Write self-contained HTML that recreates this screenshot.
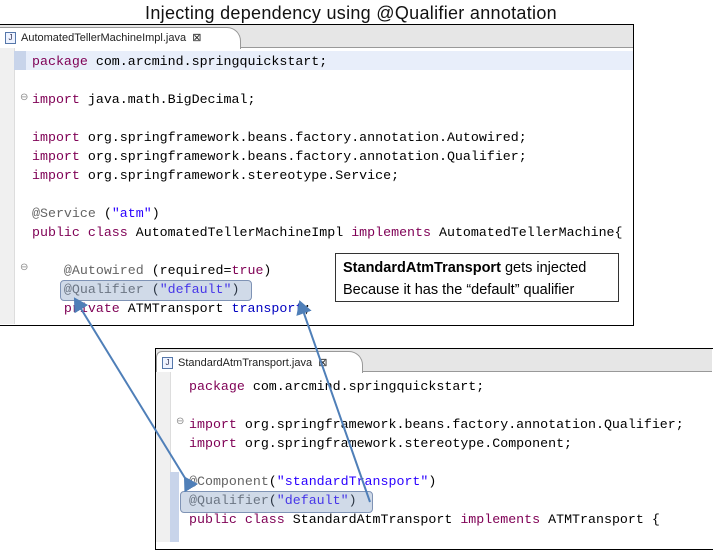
<!DOCTYPE html>
<html><head><style>
body{margin:0;width:720px;height:540px;background:#fff;position:relative;overflow:hidden;font-family:"Liberation Sans",sans-serif}
.a{position:absolute}
.code{font-family:"Liberation Mono",monospace;font-size:13.3px;white-space:pre;color:#000;line-height:19px}
.k{color:#7f0055}.s{color:#2a00ff}.n{color:#646464}.f{color:#0000c0}
.tab{font-size:11px;color:#222}
.ji{display:inline-block;width:9px;height:10px;border:1px solid #5577aa;background:#eef3ff;font-size:8px;line-height:10px;text-align:center;color:#335;vertical-align:middle;margin-right:5px}
</style></head><body>
<div class="a" style="left:0;top:3px;width:702px;text-align:center;font-size:18px;color:#111;letter-spacing:0.3px">Injecting dependency using @Qualifier annotation</div>

<!-- top panel -->
<div class="a" style="left:0;top:24px;width:633px;height:300px;border:1px solid #000;border-left:none;background:#fff"></div>
<div class="a" style="left:0;top:25px;width:633px;height:22px;background:#e6e6e6;border-bottom:1px solid #999"></div>
<div class="a" style="left:0;top:27px;width:240px;height:21px;background:#fff;border-radius:0 14px 0 0;border:1px solid #999;border-bottom:none;border-left:none"></div>
<div class="a tab" style="left:5px;top:31px"><span class="ji">J</span>AutomatedTellerMachineImpl.java&nbsp; ⊠</div>
<div class="a" style="left:0;top:48px;width:14px;height:276px;background:#f0f0f0;border-right:1px solid #ddd"></div>
<div class="a" style="left:15px;top:51px;width:618px;height:19px;background:#e8eefa"></div>
<div class="a" style="left:14px;top:51px;width:12px;height:19px;background:#c8d4ea"></div>
<div class="a code" style="left:32px;top:52px"><span class="k">package</span> com.arcmind.springquickstart;

<span class="k">import</span> java.math.BigDecimal;

<span class="k">import</span> org.springframework.beans.factory.annotation.Autowired;
<span class="k">import</span> org.springframework.beans.factory.annotation.Qualifier;
<span class="k">import</span> org.springframework.stereotype.Service;

<span class="n">@Service</span> (<span class="s">"atm"</span>)
<span class="k">public class</span> AutomatedTellerMachineImpl <span class="k">implements</span> AutomatedTellerMachine{

    <span class="n">@Autowired</span> (required=<span class="k">true</span>)
    <span class="n">@Qualifier</span> (<span class="s">"default"</span>)
    <span class="k">private</span> ATMTransport <span class="f">transport</span>;</div>
<div class="a" style="left:20px;top:92px;font-size:10px;color:#888">⊖</div>
<div class="a" style="left:20px;top:262px;font-size:10px;color:#888">⊖</div>
<div class="a" style="left:60px;top:280px;width:190px;height:19px;background:rgba(120,150,190,0.35);border:1px solid #7f93b5;border-radius:4px"></div>

<div class="a" style="left:335px;top:253px;width:284px;height:49px;border:1px solid #333;background:#fff;font-size:14.5px;line-height:22px;padding:3px 0 0 7px;box-sizing:border-box;color:#000"><b>StandardAtmTransport</b> gets injected<br>Because it has the “default” qualifier</div>

<!-- bottom panel -->
<div class="a" style="left:155px;top:348px;width:557px;height:200px;border:1px solid #000;border-right:none;background:#fff"></div>
<div class="a" style="left:156px;top:349px;width:556px;height:22px;background:#e6e6e6;border-bottom:1px solid #999"></div>
<div class="a" style="left:156px;top:351px;width:205px;height:21px;background:#fff;border-radius:6px 14px 0 0;border:1px solid #999;border-bottom:none"></div>
<div class="a tab" style="left:162px;top:356px"><span class="ji">J</span>StandardAtmTransport.java&nbsp; ⊠</div>
<div class="a" style="left:156px;top:372px;width:14px;height:170px;background:#f0f0f0;border-right:1px solid #ddd"></div>
<div class="a" style="left:170px;top:472px;width:9px;height:70px;background:#c8d4ea"></div>
<div class="a code" style="left:189px;top:377px"><span class="k">package</span> com.arcmind.springquickstart;

<span class="k">import</span> org.springframework.beans.factory.annotation.Qualifier;
<span class="k">import</span> org.springframework.stereotype.Component;

<span class="n">@Component</span>(<span class="s">"standardTransport"</span>)
<span class="n">@Qualifier</span>(<span class="s">"default"</span>)
<span class="k">public class</span> StandardAtmTransport <span class="k">implements</span> ATMTransport {</div>
<div class="a" style="left:176px;top:416px;font-size:10px;color:#888">⊖</div>
<div class="a" style="left:180px;top:491px;width:191px;height:20px;background:rgba(120,150,190,0.35);border:1px solid #7f93b5;border-radius:4px"></div>

<svg class="a" style="left:0;top:0" width="720" height="540">
<defs><marker id="m" markerWidth="8" markerHeight="8" refX="6" refY="4" orient="auto"><path d="M0,0 L7,4 L0,8 Z" fill="#4f7fb8"/></marker></defs>
<line x1="185" y1="478" x2="75" y2="299" stroke="#4f7fb8" stroke-width="2" marker-start="url(#m)" marker-end="url(#m)"/>
<line x1="370" y1="502" x2="300" y2="302" stroke="#4f7fb8" stroke-width="2" marker-end="url(#m)"/>
</svg>
</body></html>
